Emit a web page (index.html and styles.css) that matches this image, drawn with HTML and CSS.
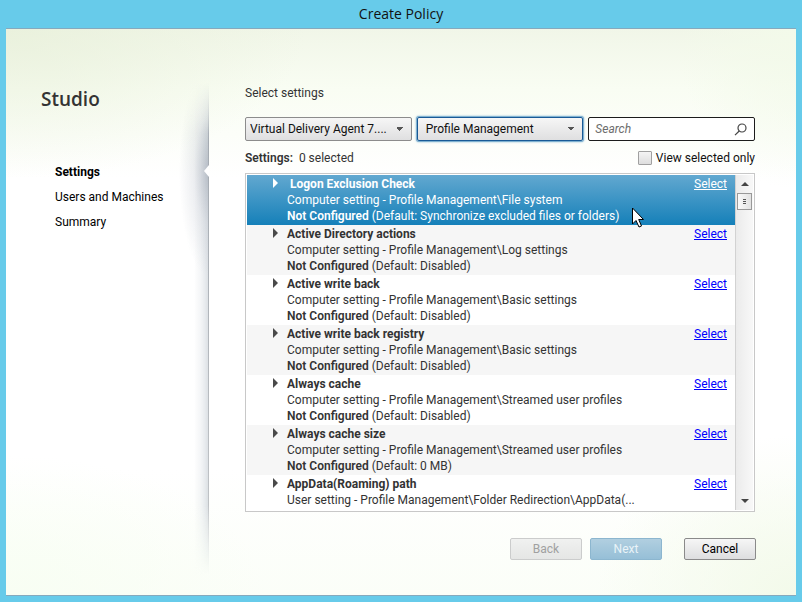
FILE: index.html
```html
<!DOCTYPE html>
<html lang="en">
<head>
<meta charset="utf-8">
<title>Create Policy</title>
<link rel="stylesheet" href="styles.css">
</head>
<body>
<div class="window">
  <header class="titlebar">Create Policy</header>
  <div class="panel">
    <aside class="sidebar">
      <h1 class="brand">Studio</h1>
      <nav class="steps">
        <a class="step step-current" href="#settings">Settings</a>
        <a class="step" href="#users">Users and Machines</a>
        <a class="step" href="#summary">Summary</a>
      </nav>
    </aside>
    <main class="content">
      <h2 class="heading">Select settings</h2>
      <div class="filters">
        <select class="dropdown" aria-label="Version"><option>Virtual Delivery Agent 7....</option></select>
        <select class="dropdown dropdown-focus" aria-label="Category"><option>Profile Management</option></select>
        <div class="search">
          <input class="search-input" type="text" placeholder="Search" aria-label="Search">
          <svg class="search-icon" viewBox="0 0 13 13" width="13" height="13"><circle cx="8" cy="5" r="4" /><path d="M5.2 8 1 12.2" /></svg>
        </div>
      </div>
      <div class="status">
        <p class="count"><b class="semi">Settings:</b>&nbsp; 0 selected</p>
        <label class="only" for="only"><input class="check" type="checkbox" id="only">View selected only</label>
      </div>
      <div class="list">
        <ul class="rows">
          <li class="row row-selected"><button class="expand" aria-label="Expand"></button><div class="info"><h3 class="name">&nbsp;Logon Exclusion Check</h3><p class="line">Computer setting - Profile Management\File system</p><p class="line"><b class="semi">Not Configured</b> (Default: Synchronize excluded files or folders)</p></div><a class="select" href="#select">Select</a>
            <svg class="pointer" viewBox="0 0 13 21" width="13" height="21"><path d="M1.500 1v16l3.500-3.500 3 6.500 2.500-1L7.700 12.500h4.800z" /></svg>
          </li>
          <li class="row"><button class="expand" aria-label="Expand"></button><div class="info"><h3 class="name">Active Directory actions</h3><p class="line">Computer setting - Profile Management\Log settings</p><p class="line"><b class="semi">Not Configured</b> (Default: Disabled)</p></div><a class="select" href="#select">Select</a></li>
          <li class="row"><button class="expand" aria-label="Expand"></button><div class="info"><h3 class="name">Active write back</h3><p class="line">Computer setting - Profile Management\Basic settings</p><p class="line"><b class="semi">Not Configured</b> (Default: Disabled)</p></div><a class="select" href="#select">Select</a></li>
          <li class="row"><button class="expand" aria-label="Expand"></button><div class="info"><h3 class="name">Active write back registry</h3><p class="line">Computer setting - Profile Management\Basic settings</p><p class="line"><b class="semi">Not Configured</b> (Default: Disabled)</p></div><a class="select" href="#select">Select</a></li>
          <li class="row"><button class="expand" aria-label="Expand"></button><div class="info"><h3 class="name">Always cache</h3><p class="line">Computer setting - Profile Management\Streamed user profiles</p><p class="line"><b class="semi">Not Configured</b> (Default: Disabled)</p></div><a class="select" href="#select">Select</a></li>
          <li class="row"><button class="expand" aria-label="Expand"></button><div class="info"><h3 class="name">Always cache size</h3><p class="line">Computer setting - Profile Management\Streamed user profiles</p><p class="line"><b class="semi">Not Configured</b> (Default: 0 MB)</p></div><a class="select" href="#select">Select</a></li>
          <li class="row"><button class="expand" aria-label="Expand"></button><div class="info"><h3 class="name">AppData(Roaming) path</h3><p class="line">User setting - Profile Management\Folder Redirection\AppData(...</p></div><a class="select" href="#select">Select</a></li>
        </ul>
        <div class="scrollbar">
          <button class="arrow arrow-up" aria-label="Scroll up"></button>
          <div class="thumb"><svg viewBox="0 0 3 5" width="3" height="5"><path d="M0 0h3v1H0zM0 2h3v1H0zM0 4h3v1H0z" /></svg></div>
          <button class="arrow arrow-down" aria-label="Scroll down"></button>
        </div>
      </div>
      <footer class="actions">
        <button class="btn btn-disabled" disabled>Back</button>
        <button class="btn btn-next" disabled>Next</button>
        <button class="btn btn-cancel">Cancel</button>
      </footer>
    </main>
  </div>
</div>
</body>
</html>
```
FILE: styles.css
```css
* { box-sizing: border-box; }
body {
  margin: 0;
  font: 12px/16px Roboto, "Open Sans", sans-serif;
  color: #333;
}
h1, h2, h3, p, ul { margin: 0; padding: 0; font-weight: 400; font-size: 12px; }
button, input, select { font: inherit; color: inherit; margin: 0; }

.window {
  display: flex;
  flex-direction: column;
  height: 100vh;
  padding: 0 6px 6px;
  background: #67cbea;
}
.titlebar {
  height: 28px;
  line-height: 28px;
  text-align: center;
  font-family: "Open Sans", sans-serif;
  font-size: 14px;
  color: #111;
}
.panel {
  flex: 1;
  min-height: 0;
  display: flex;
  border: solid #86a9bd;
  border-width: 1px 0;
  background:
    radial-gradient(ellipse 300px 150px at 0 0, #e8f0dacc, #e8f0da00),
    radial-gradient(ellipse 200px 160px at 100% 100%, #f3faea, #f3faea00),
    radial-gradient(ellipse 260px 140px at 0 100%, #f8fef3, #f8fef300),
    radial-gradient(ellipse 120px 160px at 100% 0, #f3faea, #f3faea00),
    linear-gradient(#f1f6e8, #f9fdf3 60px, #fff 150px, #fff 440px, #fbfef8);
}

.sidebar {
  position: relative;
  width: 203px;
  flex: none;
  padding-top: 56px;
}
.sidebar::after {
  content: "";
  position: absolute;
  right: 0;
  top: 54px;
  bottom: 20px;
  width: 32px;
  background:
    linear-gradient(#7d879400, #a5abb2 60px, #bfc2c5 calc(100% - 70px), #bfc2c500) right / 1px 100% no-repeat,
    radial-gradient(ellipse 30px 105px at 100% 88px, #8e98a680, #a9b0bd38 50%, #b8bfcc00) no-repeat,
    linear-gradient(to left, #b9c1ca88, #d5dbe155 7px, #e5e9ed00 15px);
  -webkit-mask-image: linear-gradient(transparent, #000 50px, #000 calc(100% - 70px), transparent);
  mask-image: linear-gradient(transparent, #000 50px, #000 calc(100% - 70px), transparent);
}
.brand {
  padding-left: 35px;
  font-family: "Open Sans", sans-serif;
  font-size: 19px;
  font-weight: 600;
  line-height: 28px;
}
.steps {
  display: flex;
  flex-direction: column;
  margin-top: 47px;
}
.step {
  position: relative;
  padding-left: 49px;
  line-height: 25px;
  color: #000;
  text-decoration: none;
}
.step-current { font-weight: 700; }
.step-current::after {
  content: "";
  position: absolute;
  z-index: 1;
  right: 0;
  top: 5px;
  border: 6px solid transparent;
  border-right: 5px solid #fff;
  border-left: 0;
}

.content {
  flex: 1;
  min-width: 0;
  display: flex;
  flex-direction: column;
  padding: 56px 41px 35px 36px;
}
.filters {
  display: grid;
  grid-template-columns: repeat(3, minmax(0, 1fr));
  gap: 5px;
  margin-top: 16px;
}
.dropdown {
  appearance: none;
  height: 24px;
  padding: 0 16px 0 4px;
  border: 1px solid #8c8c8c;
  border-radius: 2px;
  color: #111;
  background:
    linear-gradient(to bottom right, #555 50%, transparent 50%) right 7px center / 4px 4px no-repeat,
    linear-gradient(to bottom left, #555 50%, transparent 50%) right 11px center / 4px 4px no-repeat,
    linear-gradient(#f6f6f6, #dfdfe0);
  outline: 0;
}
.dropdown-focus {
  padding-left: 8px;
  border-color: #195a96;
  box-shadow: 0 0 0 1px #7fb1d0, 0 0 2px 1px #7fb1d0;
}
.search {
  display: flex;
  align-items: center;
  height: 24px;
  padding: 0 7px 0 6px;
  border: 1px solid #1c1c1c;
  border-radius: 2px;
  background: #fff;
}
.search-input {
  flex: 1;
  min-width: 0;
  padding: 0;
  border: 0;
  outline: 0;
  background: none;
}
.search-input::placeholder { color: #6d6d6d; font-style: italic; opacity: 1; }
.search-icon { fill: none; stroke: #444; stroke-width: 1.2; }

.status {
  display: flex;
  justify-content: space-between;
  align-items: center;
  margin: 9px 0 7px;
}
.semi { font-weight: 600; }
.only { display: flex; align-items: center; gap: 4px; color: #111; }
.check {
  appearance: none;
  width: 14px;
  height: 14px;
  border: 1px solid #a0a0a0;
  border-radius: 1px;
  background: linear-gradient(#f4f4f4, #dedede);
}

.list {
  flex: 1;
  min-height: 0;
  display: flex;
  padding: 1px;
  border: 1px solid #c8c8c8;
  background: #fff;
}
.rows { flex: 1; min-width: 0; overflow: hidden; list-style: none; }
.row {
  position: relative;
  display: flex;
  height: 50px;
  padding: 1px 8px 1px 26px;
}
.row:nth-child(even) { background: #f6f6f6; }
.row-selected { color: #fff; background: linear-gradient(#62a8d0, #1580b9); }
.expand {
  width: 14px;
  height: 14px;
  flex: none;
  padding: 0;
  border: 0;
  background: none;
}
.expand::before {
  content: "";
  display: block;
  width: 0;
  border: solid transparent;
  border-width: 5px 0 5px 5px;
  border-left-color: #4a4a4a;
}
.row-selected .expand::before { border-left-color: #fff; }
.info { flex: 1; min-width: 0; white-space: nowrap; }
.name { font-weight: 700; }
.select { color: #00f; }
.row-selected .select { color: #fff; }
.pointer {
  position: absolute;
  right: 91px;
  top: 32px;
  z-index: 2;
  fill: #fff;
  stroke: #000;
}

.scrollbar {
  display: flex;
  flex-direction: column;
  align-items: center;
  width: 18px;
  border-left: 1px solid #d2d2d2;
  background: linear-gradient(to right, #ebebeb, #f8f8f8);
}
.arrow {
  width: 16px;
  height: 18px;
  padding: 0;
  border: 0;
  background: none;
}
.arrow::before {
  content: "";
  display: block;
  width: 0;
  margin: auto;
  border: 4px solid transparent;
}
.arrow-up::before { border-top: 0; border-bottom-color: #444; }
.arrow-down::before { border-bottom: 0; border-top-color: #444; }
.arrow-down { margin-top: auto; }
.thumb {
  display: flex;
  align-items: center;
  justify-content: center;
  width: 15px;
  height: 17px;
  border: 1px solid #999;
  background: linear-gradient(to right, #fafafa, #e2e2e2);
  fill: #555;
}

.actions {
  display: flex;
  justify-content: flex-end;
  gap: 8px;
  margin: 26px -1px 0 0;
}
.btn {
  width: 72px;
  height: 22px;
  padding: 0;
  border: 1px solid #8a8a8a;
  border-radius: 2px;
  color: #000;
  background: linear-gradient(#f6f6f6, #dddedf);
}
.btn-disabled { border-color: #cbcccc; color: #a0a0a0; background: linear-gradient(#f0f1f0, #e5e6e5); }
.btn-next { border-color: #8cb6cf; color: #e9f3f8; background: linear-gradient(#b1cfe0, #96bfd7); }
.btn-cancel { margin-left: 14px; }
```
